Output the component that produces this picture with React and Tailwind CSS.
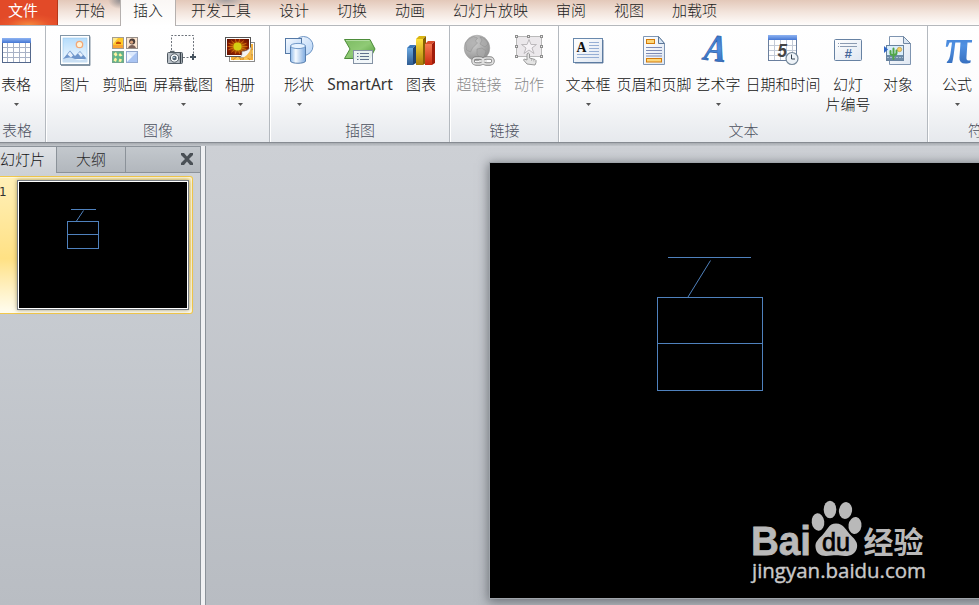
import React from "react";

const UI = "font-['Noto_Sans','Noto_Sans_CJK_SC',sans-serif] font-light";

function Icon({ children }) {
  return (
    <svg width="32" height="32" viewBox="0 0 32 32" className="block shrink-0 overflow-visible">
      {children}
    </svg>
  );
}

function Defs() {
  return (
    <svg width="0" height="0" className="absolute">
      <defs>
        <linearGradient id="sky" x1="0" y1="0" x2="0" y2="1">
          <stop offset="0" stopColor="#b5dcfb" /><stop offset="1" stopColor="#f4faff" />
        </linearGradient>
        <linearGradient id="head" x1="0" y1="0" x2="0" y2="1">
          <stop offset="0" stopColor="#8fb4f2" /><stop offset="1" stopColor="#4577d4" />
        </linearGradient>
        <linearGradient id="shape" x1="0" y1="0" x2="1" y2="1">
          <stop offset="0" stopColor="#f6faff" /><stop offset="1" stopColor="#b5d3f6" />
        </linearGradient>
        <linearGradient id="cyl" x1="0" y1="0" x2="1" y2="0">
          <stop offset="0" stopColor="#8db9ea" /><stop offset=".35" stopColor="#f5faff" /><stop offset="1" stopColor="#7fabe0" />
        </linearGradient>
        <linearGradient id="green" x1="0" y1="0" x2="1" y2="1">
          <stop offset="0" stopColor="#7cbb62" /><stop offset=".5" stopColor="#8fca75" /><stop offset="1" stopColor="#4f9a38" />
        </linearGradient>
        <linearGradient id="paper" x1="0" y1="0" x2="1" y2="1">
          <stop offset="0" stopColor="#ffffff" /><stop offset="1" stopColor="#dfe7f2" />
        </linearGradient>
        <linearGradient id="barB" x1="0" y1="0" x2="0" y2="1">
          <stop offset="0" stopColor="#6aa8e0" /><stop offset="1" stopColor="#2f5c92" />
        </linearGradient>
        <linearGradient id="barY" x1="0" y1="0" x2="0" y2="1">
          <stop offset="0" stopColor="#ffe13d" /><stop offset="1" stopColor="#a97d0a" />
        </linearGradient>
        <linearGradient id="barR" x1="0" y1="0" x2="0" y2="1">
          <stop offset="0" stopColor="#f47a52" /><stop offset="1" stopColor="#c92a10" />
        </linearGradient>
        <linearGradient id="letter" x1="0" y1="0" x2="0" y2="1">
          <stop offset="0" stopColor="#2d68bb" /><stop offset=".5" stopColor="#4f90e2" /><stop offset="1" stopColor="#2a5fae" />
        </linearGradient>
        <radialGradient id="globe" cx=".35" cy=".3" r=".8">
          <stop offset="0" stopColor="#d2d2d2" /><stop offset="1" stopColor="#8b8b8b" />
        </radialGradient>
        <radialGradient id="flower" cx=".5" cy=".5" r=".7">
          <stop offset="0" stopColor="#c9a000" /><stop offset=".35" stopColor="#a95a00" /><stop offset=".6" stopColor="#8a1c00" /><stop offset="1" stopColor="#5c1000" />
        </radialGradient>
      </defs>
    </svg>
  );
}

const TableIcon = () => (
  <Icon>
    <rect x="2.5" y="3.5" width="28" height="24" fill="#fff" stroke="#54688c" />
    <rect x="2" y="3" width="29" height="5" fill="url(#head)" />
    <path d="M7.500 8v19M13.500 8v19M19.500 8v19M25.500 8v19M3 12.500h27M3 17.500h27M3 22.500h27" stroke="#a8b2c6" />
  </Icon>
);

const PictureIcon = () => (
  <Icon>
    <rect x="1.500" y=".5" width="29" height="29" fill="#fff" stroke="#8296a8" />
    <rect x="4" y="3" width="24" height="24" fill="url(#sky)" stroke="#9cc9ee" strokeWidth=".6" />
    <circle cx="20.500" cy="9.500" r="3.200" fill="#fff4d8" stroke="#f3a877" strokeWidth="1.300" />
    <path d="M4 24L11 15.500L16 21L21 16L28 24z" fill="#6f96cb" />
    <path d="M8.500 19.500l2.500-3 3 4-2 2zM19 18.500l2-1.500 3 3-2 2z" fill="#e7f0fb" />
    <path d="M4 24q7-3 12 0t12-1v4H4z" fill="#c9dff4" />
    <path d="M31 1.500v29H2" fill="none" stroke="#64798c" strokeWidth=".8" />
  </Icon>
);

const ClipArtIcon = () => (
  <Icon>
    <rect x="3.500" y="2.500" width="11" height="11" fill="#ffc928" stroke="#a49d90" />
    <path d="M4 3h5l-5 6z" fill="#ffe98a" /><path d="M4 10h10v3H4z" fill="#f9a232" />
    <path d="M7 7.500l2-1 3 1v1.500H7z" fill="#c44d08" />
    <rect x="17.500" y="2.500" width="11" height="11" fill="#fbe4cd" stroke="#98908a" />
    <circle cx="23.200" cy="6.500" r="3" fill="#4a3c38" /><circle cx="22.600" cy="7.200" r="1.600" fill="#d9a27c" />
    <path d="M19 13q1-3 4-3t4 3z" fill="#7d6258" />
    <rect x="3.500" y="16.500" width="11" height="11" fill="#61b58a" stroke="#74a58c" />
    <path d="M4.500 19l2.500-2 1.500 3-2 1.500zM11 18l2.500 2.500-2.500 1-1.500-1.500zM6 22.500l2 1.500-1 3-2.500-1.500zM10.500 23.500l2.500 1-1 2.500-2.500-.5z" fill="#fff2a0" />
    <rect x="17.500" y="16.500" width="11" height="11" fill="#dce9fd" stroke="#93a9d0" />
    <path d="M18 17l5 5-5 5z" fill="#f5f9ff" /><path d="M23 22l5-5v10H18z" fill="#a9c4f3" />
  </Icon>
);

const ScreenshotIcon = () => (
  <Icon>
    <path d="M4.500 15V.5h22v18M16 22.500h7" fill="none" stroke="#6d737b" strokeDasharray="2 1.500" />
    <path d="M23 22h6M26 19v6" stroke="#46535f" strokeWidth="2" />
    <rect x=".5" y="17.500" width="15" height="11" rx="1" fill="#b9c0c7" stroke="#4f5962" />
    <path d="M3 15.800h4.500v1.500H3z" fill="#5a646d" /><path d="M13.500 18v10" stroke="#38424b" strokeWidth="1.400" />
    <circle cx="7.500" cy="23" r="4.200" fill="#f7fafc" stroke="#4c5660" /><circle cx="7.500" cy="23" r="2.200" fill="#526371" />
    <circle cx="7" cy="22.500" r=".8" fill="#c9e4f8" />
  </Icon>
);

const RAYS = Array.from({ length: 14 }, (_, i) => (i * Math.PI) / 7);

const AlbumIcon = () => (
  <Icon>
    <rect x="5.500" y="7.500" width="25" height="19" fill="#fff" stroke="#8b8b8b" />
    <rect x="7" y="9" width="22" height="16" fill="#f3ae38" />
    <path d="M9 25l5-4 3 4M19 25l1-5 6 5M29 20l-7-2 7-4" stroke="#c87a16" strokeWidth=".7" fill="#fbc95a" />
    <rect x="1.500" y="2.500" width="25" height="19" fill="#fff" stroke="#555" />
    <rect x="3" y="4" width="22" height="16" fill="url(#flower)" />
    {RAYS.map((a) => (
      <line key={a} x1={13.5 + 4 * Math.cos(a)} y1={11.5 + 3 * Math.sin(a)} x2={13.5 + 10 * Math.cos(a)} y2={11.5 + 7.500 * Math.sin(a)} stroke="#dd7a10" strokeWidth=".8" />
    ))}
    <circle cx="13.500" cy="11.500" r="4" fill="#d3d013" />
    <path d="M16 22.500q2.500-2 2-6 5 0 9-4.500v10.500z" fill="#f3f3f3" stroke="#8a8a8a" strokeWidth=".6" />
    <path d="M27.300 13v10H18q6-2 9.300-10z" fill="#f6b94a" />
  </Icon>
);

const ShapesIcon = () => (
  <Icon>
    <circle cx="20.500" cy="11" r="9.500" fill="url(#shape)" stroke="#6c94c4" />
    <rect x="2.500" y="3.500" width="16" height="15" fill="url(#shape)" stroke="#5579a6" />
    <path d="M7.500 11v15c0 3 15 3 15 0V11z" fill="url(#cyl)" stroke="#587fae" />
    <ellipse cx="15" cy="11" rx="7.500" ry="2.600" fill="#e6f2ff" stroke="#7098c8" />
  </Icon>
);

const SmartArtIcon = () => (
  <Icon>
    <path d="M.5 4.500H26L31 14l-5 9.500H.5L6 14z" fill="url(#green)" stroke="#4d8c3a" />
    <path d="M2 5.500h23.500" stroke="#b4dda4" />
    <rect x="9.500" y="15.500" width="19" height="13" fill="#f1f6fa" fillOpacity=".93" stroke="#8492a4" />
    <path d="M13 18.500h1.500M13 21.500h1.500M13 24.500h1.500M16 18.500h9M16 21.500h9M16 24.500h9" stroke="#60718d" />
  </Icon>
);

const ChartIcon = () => (
  <Icon>
    <path d="M2 13h6v17H2z" fill="url(#barB)" /><path d="M2 13l3-3h6l-3 3z" fill="#3976b8" /><path d="M8 13l3-3v18l-3 2z" fill="#1f426f" />
    <path d="M11 4h7v26h-7z" fill="url(#barY)" /><path d="M11 4l3-3h7l-3 3z" fill="#d9b512" /><path d="M18 4l3-3v27l-3 2z" fill="#866003" />
    <path d="M20 9h7v21h-7z" fill="url(#barR)" /><path d="M20 9l3-3h7l-3 3z" fill="#d84c2b" /><path d="M27 9l3-3v22l-3 2z" fill="#a11c0a" />
  </Icon>
);

const LinkIcon = () => (
  <Icon>
    <circle cx="14" cy="13" r="12.800" fill="url(#globe)" stroke="#9a9a9a" strokeWidth=".5" />
    <path d="M2.500 8q3-5 8-6.500l4 1.500-2 3 2 2-5 5-2 4-4-2zM17 2q6 1 8 7l-3 3-5-3 2-4zM14 14l5-1 4 3-2 6-4 1-3-4z" fill="#a9a9a9" fillOpacity=".7" stroke="#8e8e8e" strokeWidth=".5" />
    <g fill="none" stroke="#858585" strokeWidth="3.500"><rect x="10" y="23" width="10" height="6" rx="3" /><rect x="20" y="23" width="10" height="6" rx="3" /></g>
    <g fill="none" stroke="#e0e0e0" strokeWidth="1.700"><rect x="10" y="23" width="10" height="6" rx="3" /><rect x="20" y="23" width="10" height="6" rx="3" /><path d="M16 26h8" /></g>
  </Icon>
);

const ActionIcon = () => (
  <Icon>
    <rect x="3.500" y="1.500" width="25" height="20" fill="#ebe8eb" stroke="#bababa" />
    <path d="M16 4.500l2 5h5.500l-4.500 3.500 2 5.500-5-3.500-5 3.500 2-5.500-4.500-3.500H14z" fill="#f5f2f5" stroke="#bcb9bc" />
    <g fill="#eee" stroke="#8f8f8f">
      <rect x="2.500" y=".5" width="2" height="2" /><rect x="14.500" y=".5" width="2" height="2" /><rect x="27.500" y=".5" width="2" height="2" />
      <rect x="2.500" y="10.500" width="2" height="2" /><rect x="27.500" y="10.500" width="2" height="2" />
      <rect x="2.500" y="20.500" width="2" height="2" /><rect x="27.500" y="20.500" width="2" height="2" />
    </g>
    <path d="M14 29l-3.500-4q0-2 3.500 0v-6q1.500-2 2.500 0v4l5.500 1.500q1.500.5 1 3l-1 2.500z" fill="#e4e4e4" stroke="#989898" />
    <path d="M18.500 24v2M20.800 24.500v2" stroke="#aaa" strokeWidth=".7" />
  </Icon>
);

const TextBoxIcon = () => (
  <Icon>
    <rect x="1.500" y="3.500" width="29" height="24" fill="url(#paper)" stroke="#6989ad" />
    <path d="M31 5v23H3" fill="none" stroke="#49688f" strokeWidth=".8" />
    <path d="M17 7.500h10M17 10.500h10M17 13.500h10M17 16.500h10M5 19.500h22M5 22.500h22" stroke="#7f9dcc" strokeWidth=".8" />
    <text x="4.500" y="17" fontFamily="Liberation Serif" fontWeight="700" fontSize="15" textLength="10" lengthAdjust="spacingAndGlyphs" fill="#111">A</text>
  </Icon>
);

const HeaderFooterIcon = () => (
  <Icon>
    <path d="M5.500 1.500h15l6 7v21h-21z" fill="url(#paper)" stroke="#7e96b4" />
    <path d="M20.500 1.500v7h6z" fill="#d8e6f5" stroke="#5d7899" />
    <path d="M8 12.500h16M8 15.500h16M8 18.500h16M8 21h16" stroke="#7180ad" strokeWidth=".9" />
    <rect x="8.500" y="4.500" width="8" height="4" fill="#fcd77b" stroke="#d37b0a" />
    <rect x="8.500" y="23.500" width="15" height="3.500" fill="#fcd77b" stroke="#d37b0a" />
  </Icon>
);

const WordArtIcon = () => (
  <Icon>
    <text x="2.500" y="26" transform="rotate(7 14 16)" fontFamily="Liberation Serif" fontWeight="700" fontStyle="italic" fontSize="38" textLength="22" lengthAdjust="spacingAndGlyphs" fill="url(#letter)" stroke="#2a5da8" strokeWidth=".7">A</text>
  </Icon>
);

const DateIcon = () => (
  <Icon>
    <rect x="1.500" y=".5" width="28" height="25" fill="#fff" stroke="#6a7f9e" />
    <rect x="1" y="0" width="29" height="5" fill="url(#head)" />
    <path d="M7.500 5v20M13.500 5v20M19.500 5v20M25.500 5v20M2 10.500h27M2 15.500h27M2 20.500h27" stroke="#c3cad6" />
    <text x="10.500" y="22" fontFamily="Liberation Sans" fontWeight="700" fontStyle="italic" fontSize="19" textLength="9.5" lengthAdjust="spacingAndGlyphs" fill="#444">5</text>
    <circle cx="25" cy="23.500" r="6" fill="#eef3f8" stroke="#75889a" strokeWidth="1.200" />
    <path d="M24.500 19.500v4.500H28" fill="none" stroke="#33414f" />
  </Icon>
);

const SlideNumberIcon = () => (
  <Icon>
    <rect x="2.500" y="4.500" width="27" height="21" rx="1" fill="url(#paper)" stroke="#6782a3" />
    <path d="M6 8.500h1M6 11.500h1M8 8.500h17M8 11.500h17" stroke="#8b9bb2" />
    <text x="12.500" y="23" fontFamily="Liberation Sans" fontWeight="700" fontStyle="italic" fontSize="13" fill="#45669a">#</text>
  </Icon>
);

const ObjectIcon = () => (
  <Icon>
    <path d="M7.500 1.500h14l7 7v21h-21z" fill="url(#paper)" stroke="#7e94b0" />
    <path d="M21.500 1.500v7h7z" fill="#dae6f2" stroke="#7188a3" />
    <rect x="4.500" y="10.500" width="17" height="15" fill="#d9edfb" stroke="#68839f" />
    <path d="M5 20h16v5H5z" fill="#6c8aa6" /><path d="M5 22.500h16" stroke="#a9bfd2" strokeDasharray="2 1" />
    <circle cx="17.500" cy="14.500" r="2.200" fill="#f4cf62" stroke="#bf9741" strokeWidth=".7" />
    <path d="M11.500 24V13.500M8.500 16v2.500q0 1.500 3 1.500t3-2V15.500" fill="none" stroke="#4fa548" strokeWidth="2" strokeLinecap="round" />
    <path d="M2 11l4 3.500-4 3.500z" fill="#2f65c4" />
  </Icon>
);

const EquationIcon = () => (
  <Icon>
    <text x="3.500" y="27.500" fontFamily="Liberation Serif" fontWeight="700" fontSize="50" textLength="27" lengthAdjust="spacingAndGlyphs" fill="url(#letter)" transform="skewX(-4) translate(1.500 0)">π</text>
  </Icon>
);

function Tool({ icon, label, second, w, arrow, disabled }) {
  return (
    <div className={`flex shrink-0 flex-col items-center pt-[9px] ${w}`}>
      {icon}
      <div className={`mt-[7px] flex flex-col items-center whitespace-nowrap text-[15px] leading-5 ${disabled ? "text-[#8a8a8a]" : "text-[#141414]"}`}>
        <span className={label === "SmartArt" ? "text-[15.5px] font-normal text-[#333]" : ""}>{label}</span>
        {second && <span>{second}</span>}
      </div>
      {arrow && (
        <svg width="5" height="3" className="mt-[9px] block"><path d="M0 0h5L2.500 3z" fill="#555" /></svg>
      )}
    </div>
  );
}

function Group({ title, w, children }) {
  return (
    <div className={`flex h-full shrink-0 flex-col justify-between border-r border-[#b4b9bf] shadow-[1px_0_0_#fff] ${w}`}>
      <div className="flex pl-1">{children}</div>
      <div className="pb-[2px] pl-px text-center text-[15px] leading-5 text-[#4c515e]">{title}</div>
    </div>
  );
}

const LATER_TABS = ["开发工具", "设计", "切换", "动画", "幻灯片放映", "审阅", "视图", "加载项"];

function TabBar() {
  return (
    <div className="flex h-[26px] w-full border-b border-[#b5b8bc] bg-linear-to-b from-[#e3c8b9] via-[#f3e5dd] to-[#fffdfc] text-[15px] leading-[21px] text-[#222]">
      <div className="h-[25px] w-[58px] border-r border-[#b63719] bg-[radial-gradient(ellipse_60%_45%_at_bottom,#f58a3f_0%,#e8552c_60%,#e24a28_100%)] pl-2 font-normal text-white">文件</div>
      <div className="w-[62px] bg-[radial-gradient(ellipse_12px_9px_at_100%_0,#8f8d90_0%,transparent_100%)] pl-[17px]">开始</div>
      <div className="h-[26px] w-14 border-x border-[#b5b0ae] bg-linear-to-b from-[#faf7f5] to-white text-center">插入</div>
      <div className="flex flex-1 gap-7 whitespace-nowrap bg-[radial-gradient(ellipse_22px_7px_at_50px_0,#a5a0a1_0%,transparent_100%)] pl-[15px]">
        {LATER_TABS.map((t) => <span key={t}>{t}</span>)}
      </div>
    </div>
  );
}

function Ribbon() {
  return (
    <div className="flex h-[116px] w-full overflow-hidden bg-linear-to-b from-white via-[#fcfcfd] via-55% to-[#e6e9ed]">
      <div className="flex h-full w-[46px] shrink-0 flex-col justify-between border-r border-[#b4b9bf] shadow-[1px_0_0_#fff]">
        <Tool icon={<TableIcon />} label="表格" w="w-8" arrow />
        <div className="pb-[2px] pl-[2px] text-[15px] leading-5 text-[#4c515e]">表格</div>
      </div>
      <Group title="图像" w="w-[224px]">
        <Tool icon={<PictureIcon />} label="图片" w="w-[50px]" />
        <Tool icon={<ClipArtIcon />} label="剪贴画" w="w-[50px]" />
        <Tool icon={<ScreenshotIcon />} label="屏幕截图" w="w-[66px]" arrow />
        <Tool icon={<AlbumIcon />} label="相册" w="w-12" arrow />
      </Group>
      <Group title="插图" w="w-[180px]">
        <Tool icon={<ShapesIcon />} label="形状" w="w-[50px]" arrow />
        <Tool icon={<SmartArtIcon />} label="SmartArt" w="w-[72px]" />
        <Tool icon={<ChartIcon />} label="图表" w="w-[50px]" />
      </Group>
      <Group title="链接" w="w-[109px]">
        <Tool icon={<LinkIcon />} label="超链接" w="w-[50px]" disabled />
        <Tool icon={<ActionIcon />} label="动作" w="w-[50px]" disabled />
      </Group>
      <Group title="文本" w="w-[369px]">
        <Tool icon={<TextBoxIcon />} label="文本框" w="w-[50px]" arrow />
        <Tool icon={<HeaderFooterIcon />} label="页眉和页脚" w="w-[82px]" />
        <Tool icon={<WordArtIcon />} label="艺术字" w="w-[46px]" arrow />
        <Tool icon={<DateIcon />} label="日期和时间" w="w-[84px]" />
        <Tool icon={<SlideNumberIcon />} label="幻灯" second="片编号" w="w-[46px]" />
        <Tool icon={<ObjectIcon />} label="对象" w="w-[54px]" />
      </Group>
      <Group title="符号" w="w-[110px]">
        <Tool icon={<EquationIcon />} label="公式" w="w-[50px]" arrow />
      </Group>
    </div>
  );
}

function SlidePane() {
  return (
    <div className="h-full w-[201px] shrink-0 border-r border-t border-[#8b9299] bg-linear-to-b from-[#cfd3d8] to-[#b9bdc3]">
      <div className="flex h-[26px] text-[15px] leading-[24px]">
        <div className="w-14 bg-linear-to-b from-[#dfe2e6] to-[#cdd1d6] text-[#141414]">幻灯片</div>
        <div className="w-[70px] border-x border-b border-[#8b9299] bg-linear-to-b from-[#c3c8cd] to-[#b2b7bd] text-center text-[#2c2c2c]">大纲</div>
        <div className="flex flex-1 items-center justify-end border-b border-[#8b9299] bg-linear-to-b from-[#c3c8cd] to-[#b2b7bd] pr-[7px]">
          <svg width="12" height="12" className="-mt-px" fill="#4a5056">
            <path d="M0 0h3L6 3.500 9 0h3v2L8 6l4 4v2H9L6 8.500 3 12H0v-2l4-4-4-4z" />
          </svg>
        </div>
      </div>
      <div className="mt-[3px] flex h-[138px] w-[193px] rounded-r-[3px] border border-l-0 border-[#f2c84b] bg-linear-to-b from-[#fff0b8] via-[#ffe184] via-60% to-[#fffdf0] shadow-[inset_-1px_1px_0_#fff8d8]">
        <div className="w-[17px] pt-[5px] font-['DejaVu_Sans'] text-[12px] font-normal leading-5 text-[#333]"><span className="-ml-px">1</span></div>
        <div className="mt-[3px] h-[130px] w-[172px] border border-[#777c82] bg-white p-px shadow-[0_0_4px_0_rgba(60,50,0,0.5)]">
          <svg width="168" height="126" className="block bg-black" fill="none" stroke="#4f81bd">
            <path d="M52 27.500h25" />
            <path d="M64.500 28.500L57.500 39" />
            <rect x="48.500" y="39.500" width="31" height="27" />
            <path d="M48 52.500h31" />
          </svg>
        </div>
      </div>
    </div>
  );
}

function Watermark() {
  return (
    <svg width="190" height="90" viewBox="0 0 190 90" className="absolute left-[258px] top-[333px]" fill="#b9b9b9">
      <text x="3" y="58.500" fontFamily="Liberation Sans" fontWeight="700" fontSize="41" textLength="60" lengthAdjust="spacingAndGlyphs" stroke="#b9b9b9" strokeWidth=".8">Bai</text>
      <ellipse cx="70" cy="26" rx="6.300" ry="8.700" transform="rotate(-6 70 26)" />
      <ellipse cx="82" cy="13.500" rx="6.300" ry="8.700" />
      <ellipse cx="97.500" cy="14.500" rx="6.500" ry="8.500" transform="rotate(10 97.500 14.500)" />
      <ellipse cx="107" cy="29.500" rx="6.500" ry="8.500" transform="rotate(8 107 29.500)" />
      <path d="M88 27.500c8 0 10 7 15 12 4 4 7 7 6 12-1 6-6 8.500-12 8.500-4 0-6-.7-9-.7s-6 .7-10 .7c-6 0-10-3-10.500-9-.5-5 3-8 7-12 5-5 6-11.500 13.500-11.500z" />
      <text x="74" y="55" fontFamily="Liberation Sans" fontWeight="400" fontSize="25" textLength="28" lengthAdjust="spacingAndGlyphs" fill="#000" stroke="#000" strokeWidth=".7">du</text>
      <text x="115.500" y="57" fontFamily="Noto Sans CJK SC" fontWeight="700" fontSize="30" textLength="60" lengthAdjust="spacingAndGlyphs">经验</text>
      <text x="4" y="82" fontFamily="Open Sans" fontWeight="500" fontSize="20" textLength="174" lengthAdjust="spacingAndGlyphs" fill="#c9c9c9" stroke="#c9c9c9" strokeWidth=".4">jingyan.baidu.com</text>
    </svg>
  );
}

export default function App() {
  return (
    <div className={`flex h-[605px] w-[979px] flex-col overflow-hidden ${UI}`}>
      <Defs />
      <TabBar />
      <Ribbon />
      <div className="h-1 shrink-0 border-t border-[#868b92] bg-linear-to-b from-[#a7abb0] to-[#c3c7cc]" />
      <div className="flex min-h-0 flex-1">
        <SlidePane />
        <div className="w-[5px] shrink-0 border-r border-[#8b9299] bg-[#f0f1f3]" />
        <div className="flex-1 overflow-hidden bg-linear-to-b from-[#cdd0d5] to-[#b8bcc2] pl-[283px] pt-4">
          <div className="relative h-[437px] w-[500px] border border-[#9fa4aa] bg-black shadow-[0_2px_10px_1px_rgba(60,65,72,0.6)]">
            <svg width="489" height="435" className="block" fill="none" stroke="#4f81bd">
              <path d="M178 94.500h83" />
              <path d="M220.500 97.500L198 134" />
              <rect x="167.500" y="134.500" width="105" height="93" />
              <path d="M167 180.500h105" />
            </svg>
            <Watermark />
          </div>
        </div>
      </div>
    </div>
  );
}
